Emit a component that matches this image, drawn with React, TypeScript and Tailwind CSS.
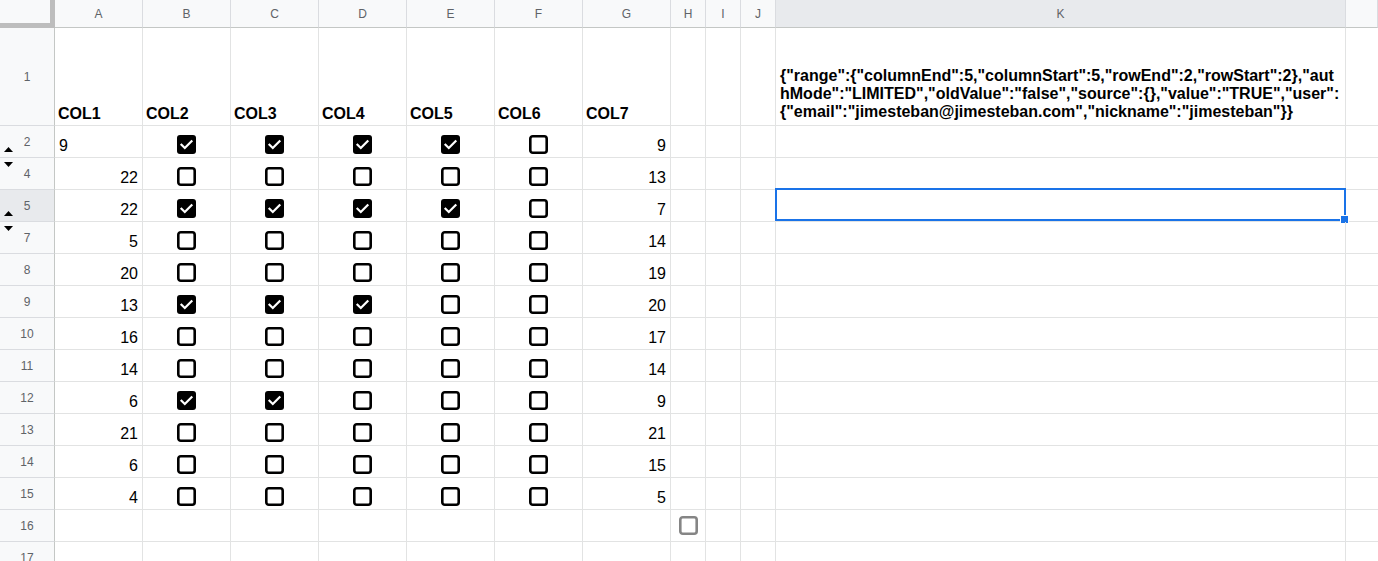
import React from "react";

type Row = {
  n: number;
  a?: string;
  aLeft?: boolean;
  checks?: number[];
  g?: string;
  up?: boolean;
  down?: boolean;
  sel?: boolean;
  ghost?: boolean;
};

const ROWS: Row[] = [
  { n: 2, a: "9", aLeft: true, checks: [1, 1, 1, 1, 0], g: "9", up: true },
  { n: 4, a: "22", checks: [0, 0, 0, 0, 0], g: "13", down: true },
  { n: 5, a: "22", checks: [1, 1, 1, 1, 0], g: "7", up: true, sel: true },
  { n: 7, a: "5", checks: [0, 0, 0, 0, 0], g: "14", down: true },
  { n: 8, a: "20", checks: [0, 0, 0, 0, 0], g: "19" },
  { n: 9, a: "13", checks: [1, 1, 1, 0, 0], g: "20" },
  { n: 10, a: "16", checks: [0, 0, 0, 0, 0], g: "17" },
  { n: 11, a: "14", checks: [0, 0, 0, 0, 0], g: "14" },
  { n: 12, a: "6", checks: [1, 1, 0, 0, 0], g: "9" },
  { n: 13, a: "21", checks: [0, 0, 0, 0, 0], g: "21" },
  { n: 14, a: "6", checks: [0, 0, 0, 0, 0], g: "15" },
  { n: 15, a: "4", checks: [0, 0, 0, 0, 0], g: "5" },
  { n: 16, ghost: true },
  { n: 17 },
];

const LETTERS = ["A", "B", "C", "D", "E", "F", "G", "H", "I", "J", "K", ""];

function Box({ checked, ghost }: { checked?: boolean; ghost?: boolean }) {
  if (checked) {
    return (
      <svg width="19" height="19" viewBox="0 0 19 19">
        <rect x="0" y="0" width="19" height="19" rx="3" fill="#000" />
        <polyline
          points="4.5,9.8 7.8,13 14.5,6.2"
          fill="none"
          stroke="#fff"
          strokeWidth="2.2"
          strokeLinecap="square"
        />
      </svg>
    );
  }
  return (
    <svg width="19" height="19" viewBox="0 0 19 19">
      <rect
        x="1.3"
        y="1.3"
        width="16.4"
        height="16.4"
        rx="2.5"
        fill="#fff"
        stroke={ghost ? "#858585" : "#000"}
        strokeWidth="2.6"
      />
    </svg>
  );
}

const cellB = "border-r border-b border-[#e2e3e3] h-[32px]";
const numCls =
  "flex items-end justify-end px-[4px] pb-[2px] text-[16px] leading-[18px] text-black";
const boxCls = "flex items-end justify-center pb-[3px]";

export default function App() {
  return (
    <div
      className="w-[1378px] h-[561px] overflow-hidden bg-white"
      style={{ fontFamily: '"Liberation Sans", Arial, sans-serif' }}
    >
      <div className="grid grid-cols-[55px_88px_88px_88px_88px_88px_88px_88px_35px_35px_35px_570px_1fr]">
        {/* header row */}
        <div className="h-[28px] bg-[#f8f9fa] border-r-[5px] border-b-[5px] border-[#bdbdbd]" />
        {LETTERS.map((l, i) => (
          <div
            key={i}
            className={`h-[28px] flex items-center justify-center text-[12px] text-[#5f6368] border-b border-b-[#c4c7c5] border-r border-r-[#dadce0] ${
              l === "K" ? "bg-[#e8eaed]" : "bg-[#f8f9fa]"
            }`}
          >
            {l}
          </div>
        ))}

        {/* row 1 */}
        <div className="h-[98px] bg-[#f8f9fa] border-r border-r-[#c4c7c5] border-b border-b-[#dadce0] flex items-center justify-center text-[12px] text-[#5f6368]">
          1
        </div>
        {["COL1", "COL2", "COL3", "COL4", "COL5", "COL6", "COL7"].map((c) => (
          <div
            key={c}
            className="h-[98px] border-r border-b border-[#e2e3e3] flex items-end pl-[3px] pb-[2px] text-[16px] leading-[18px] font-bold text-black"
          >
            {c}
          </div>
        ))}
        <div className="h-[98px] border-r border-b border-[#e2e3e3]" />
        <div className="h-[98px] border-r border-b border-[#e2e3e3]" />
        <div className="h-[98px] border-r border-b border-[#e2e3e3]" />
        <div className="h-[98px] border-r border-b border-[#e2e3e3] flex flex-col justify-end pl-[4px] pb-[4px] text-[16px] leading-[18px] font-bold text-black whitespace-nowrap">
          <span>{'{"range":{"columnEnd":5,"columnStart":5,"rowEnd":2,"rowStart":2},"aut'}</span>
          <span>{'hMode":"LIMITED","oldValue":"false","source":{},"value":"TRUE","user":'}</span>
          <span>{'{"email":"jimesteban@jimesteban.com","nickname":"jimesteban"}}'}</span>
        </div>
        <div className="h-[98px] border-b border-[#e2e3e3]" />

        {ROWS.map((r) => (
          <React.Fragment key={r.n}>
            <div
              className={`relative h-[32px] border-r border-r-[#c4c7c5] border-b border-b-[#dadce0] flex items-center justify-center text-[12px] text-[#5f6368] ${
                r.sel ? "bg-[#e8eaed]" : "bg-[#f8f9fa]"
              }`}
            >
              {r.n}
              {r.up && (
                <svg
                  className="absolute left-[4px] bottom-[5px]"
                  width="9"
                  height="5"
                  viewBox="0 0 9 5"
                >
                  <polygon points="0,5 9,5 4.5,0" fill="#000" />
                </svg>
              )}
              {r.down && (
                <svg
                  className="absolute left-[4px] top-[4px]"
                  width="9"
                  height="5"
                  viewBox="0 0 9 5"
                >
                  <polygon points="0,0 9,0 4.5,5" fill="#000" />
                </svg>
              )}
            </div>
            {/* A */}
            <div
              className={`${cellB} ${numCls} ${r.aLeft ? "!justify-start" : ""}`}
            >
              {r.a}
            </div>
            {/* B-F */}
            {[0, 1, 2, 3, 4].map((i) => (
              <div key={i} className={`${cellB} ${boxCls}`}>
                {r.checks && <Box checked={r.checks[i] === 1} />}
              </div>
            ))}
            {/* G */}
            <div className={`${cellB} ${numCls}`}>{r.g}</div>
            {/* H */}
            <div className={`${cellB} flex items-center justify-center`}>
              {r.ghost && <Box ghost />}
            </div>
            {/* I, J */}
            <div className={cellB} />
            <div className={cellB} />
            {/* K */}
            <div className={`${cellB} relative`}>
              {r.sel && (
                <>
                  <div className="absolute left-[-1px] top-[-2px] right-[-1px] bottom-[0px] border-2 border-[#1a73e8]" />
                  <div className="absolute right-[-4px] bottom-[-3px] w-[7px] h-[7px] bg-[#1a73e8] border border-white box-content" />
                </>
              )}
            </div>
            <div className="border-b border-[#e2e3e3] h-[32px]" />
          </React.Fragment>
        ))}
      </div>
    </div>
  );
}
